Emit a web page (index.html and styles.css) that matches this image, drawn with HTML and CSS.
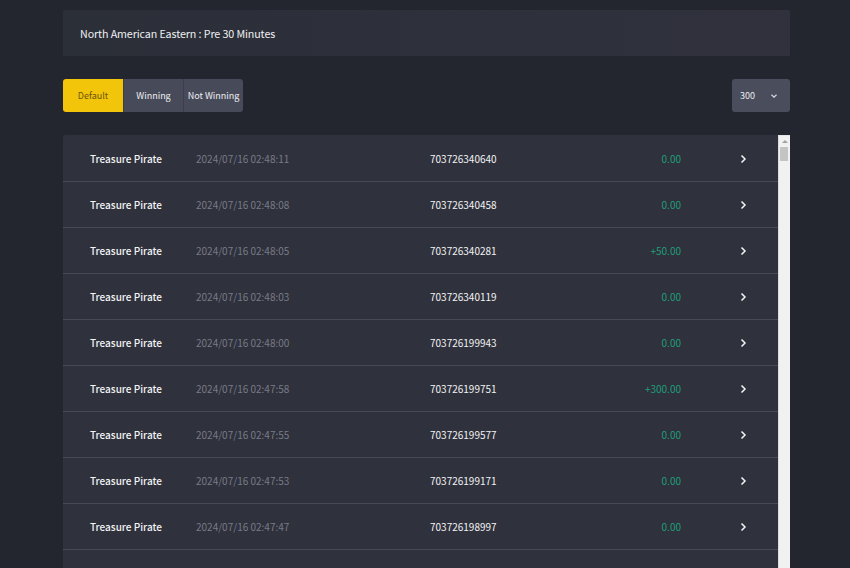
FILE: index.html
```html
<!DOCTYPE html>
<html>
<head>
	<meta charset="utf-8">
	<title>Bet History</title>
	<link rel="stylesheet" href="styles.css">
</head>
<body>
	<div class="wrap">
		<div class="zone">North American Eastern : Pre 30 Minutes</div>

		<div class="toolbar">
			<div class="tabs">
				<a class="tab on">Default</a>
				<a class="tab">Winning</a>
				<a class="tab">Not Winning</a>
			</div>
			<div class="size">
				<span>300</span>
				<svg width="8" height="6" viewBox="0 0 8 6"><path d="M1.5 1.8 L4 4.2 L6.5 1.8" fill="none" stroke="#d8d9de" stroke-width="1.2"/></svg>
			</div>
		</div>

		<div class="board">
			<ul class="list" id="list"></ul>
			<div class="bar">
				<div class="bar-up"></div>
				<div class="bar-thumb"></div>
			</div>
		</div>
	</div>

	<script type="text/javascript">
		var rows = [
			["2024/07/16 02:48:11", "703726340640", "0.00"],
			["2024/07/16 02:48:08", "703726340458", "0.00"],
			["2024/07/16 02:48:05", "703726340281", "+50.00"],
			["2024/07/16 02:48:03", "703726340119", "0.00"],
			["2024/07/16 02:48:00", "703726199943", "0.00"],
			["2024/07/16 02:47:58", "703726199751", "+300.00"],
			["2024/07/16 02:47:55", "703726199577", "0.00"],
			["2024/07/16 02:47:53", "703726199171", "0.00"],
			["2024/07/16 02:47:47", "703726198997", "0.00"]
		];
		var chev = '<svg width="8" height="12" viewBox="0 0 8 12"><path d="M2.5 2.5 L6 6 L2.5 9.5" fill="none" stroke="#f4f4f6" stroke-width="1.5"/></svg>';
		var html = "";
		for (var i = 0; i < rows.length; i++) {
			var r = rows[i];
			html += '<li><span class="game">Treasure Pirate</span>'
				+ '<span class="time">' + r[0] + '</span>'
				+ '<span class="no">' + r[1] + '</span>'
				+ '<span class="win">' + r[2] + '</span>'
				+ '<span class="go">' + chev + '</span></li>';
		}
		html += '<li class="more"></li>';
		document.getElementById("list").innerHTML = html;
	</script>
</body>
</html>
```

FILE: styles.css
```css
* {margin: 0; padding: 0; box-sizing: border-box;}
html, body {height: 100%; overflow: hidden;}
body {background: #23262f; font-family: "Noto Sans CJK KR", "Noto Sans", sans-serif; color: #fff;}

.wrap {width: 727px; margin: 10px 0 0 63px;}

.zone {height: 46px; display: flex; align-items: center; padding-left: 17px; font-size: 10.7px; letter-spacing: -0.1px; color: #eef0f3; background: linear-gradient(90deg, #2b2f38, #30313d); border-radius: 2px;}

.toolbar {display: flex; justify-content: space-between; margin-top: 23px;}
.tabs {display: flex; border-radius: 3px; overflow: hidden;}
.tab {width: 60px; height: 33px; display: flex; align-items: center; justify-content: center; font-size: 9px; color: #eceef2; background: #474a58; border-left: 1px solid #3c3f4b;}
.tab:first-child {border-left: 0;}
.tab.on {background: #f2c40a; color: #6b5410;}
.size {width: 58px; height: 33px; display: flex; align-items: center; justify-content: space-between; padding: 0 12px 0 8px; font-size: 9px; color: #eceef2; background: #4a4d5c; border-radius: 3px;}

.board {display: flex; margin-top: 23px; height: 470px; overflow: hidden;}
.list {flex: 1; list-style: none; background: #2f313c; border-radius: 3px 0 0 0; padding-top: 1px;}
.list li {height: 46px; display: flex; align-items: center; border-bottom: 1px solid #474955; font-size: 10px;}
.list .game {width: 133px; padding-left: 27px; font-weight: 500; color: #f2f3f5;}
.list .time {width: 234px; color: #787b87;}
.list .no {width: 110px; color: #f2f3f5;}
.list .win {width: 141px; text-align: right; color: #1f9e78;}
.list .go {margin-left: 58px; display: flex;}

.bar {width: 12px; background: #f1f1f1; border-left: 1px solid #dcdcdc; border-top: 1px solid #e6e6e6;}
.bar-up {height: 10px; display: flex; justify-content: center; align-items: center;}
.bar-up::before {content: ""; border: 3px solid transparent; border-bottom: 3px solid #a3a3a3; border-top: 0;}
.bar-thumb {height: 14px; margin: 1px 2px 0 1px; background: #c4c4c4;}
```
